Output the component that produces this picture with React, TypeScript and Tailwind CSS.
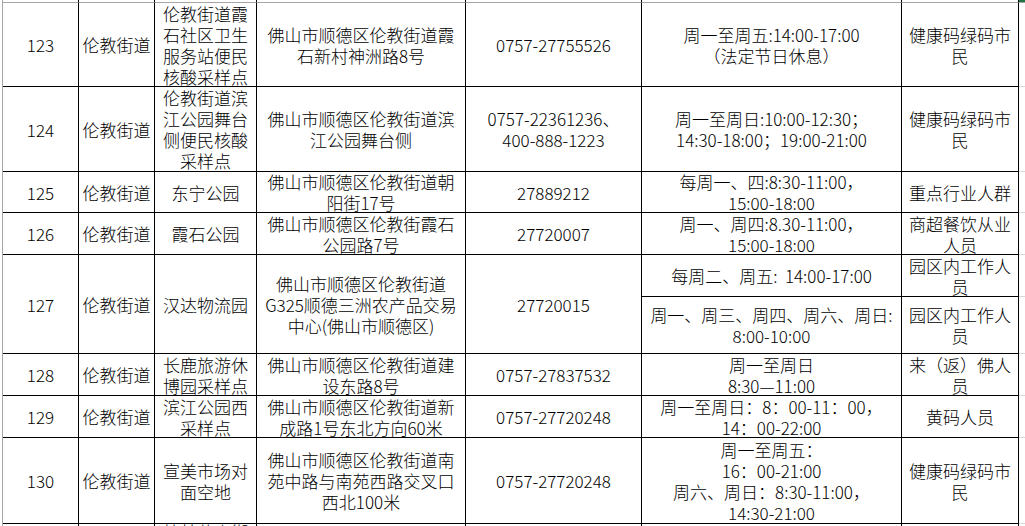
import React from "react";

interface Slot {
  time: string[];
  target: string[];
  h: string;
}

interface SiteRow {
  no: string;
  street: string;
  name: string[];
  addr: string[];
  phone: string[];
  h: string;
  slots: Slot[];
}

const rows: SiteRow[] = [
  {
    no: "123",
    street: "伦教街道",
    name: ["伦教街道霞", "石社区卫生", "服务站便民", "核酸采样点"],
    addr: ["佛山市顺德区伦教街道霞", "石新村神洲路8号"],
    phone: ["0757-27755526"],
    h: "h-[84px]",
    slots: [{ time: ["周一至周五:14:00-17:00", "（法定节日休息）"], target: ["健康码绿码市", "民"], h: "flex-1" }],
  },
  {
    no: "124",
    street: "伦教街道",
    name: ["伦教街道滨", "江公园舞台", "侧便民核酸", "采样点"],
    addr: ["佛山市顺德区伦教街道滨", "江公园舞台侧"],
    phone: ["0757-22361236、", "400-888-1223"],
    h: "h-[85px]",
    slots: [{ time: ["周一至周日:10:00-12:30；", "14:30-18:00；19:00-21:00"], target: ["健康码绿码市", "民"], h: "flex-1" }],
  },
  {
    no: "125",
    street: "伦教街道",
    name: ["东宁公园"],
    addr: ["佛山市顺德区伦教街道朝", "阳街17号"],
    phone: ["27889212"],
    h: "h-[41px]",
    slots: [{ time: ["每周一、四:8:30-11:00，", "15:00-18:00"], target: ["重点行业人群"], h: "flex-1" }],
  },
  {
    no: "126",
    street: "伦教街道",
    name: ["霞石公园"],
    addr: ["佛山市顺德区伦教街霞石", "公园路7号"],
    phone: ["27720007"],
    h: "h-[42px]",
    slots: [{ time: ["周一、周四:8.30-11:00，", "15:00-18:00"], target: ["商超餐饮从业", "人员"], h: "flex-1" }],
  },
  {
    no: "127",
    street: "伦教街道",
    name: ["汉达物流园"],
    addr: ["佛山市顺德区伦教街道", "G325顺德三洲农产品交易", "中心(佛山市顺德区)"],
    phone: ["27720015"],
    h: "h-[99px]",
    slots: [
      { time: ["每周二、周五:  14:00-17:00"], target: ["园区内工作人", "员"], h: "h-[42px]" },
      { time: ["周一、周三、周四、周六、周日:", "8:00-10:00"], target: ["园区内工作人", "员"], h: "flex-1" },
    ],
  },
  {
    no: "128",
    street: "伦教街道",
    name: ["长鹿旅游休", "博园采样点"],
    addr: ["佛山市顺德区伦教街道建", "设东路8号"],
    phone: ["0757-27837532"],
    h: "h-[42px]",
    slots: [{ time: ["周一至周日", "8:30—11:00"], target: ["来（返）佛人", "员"], h: "flex-1" }],
  },
  {
    no: "129",
    street: "伦教街道",
    name: ["滨江公园西", "采样点"],
    addr: ["佛山市顺德区伦教街道新", "成路1号东北方向60米"],
    phone: ["0757-27720248"],
    h: "h-[42px]",
    slots: [{ time: ["周一至周日：8：00-11：00，", "14：00-22:00"], target: ["黄码人员"], h: "flex-1" }],
  },
  {
    no: "130",
    street: "伦教街道",
    name: ["宣美市场对", "面空地"],
    addr: ["佛山市顺德区伦教街道南", "苑中路与南苑西路交叉口", "西北100米"],
    phone: ["0757-27720248"],
    h: "h-[86px]",
    slots: [
      {
        time: ["周一至周五：", "16：00-21:00", "周六、周日：8:30-11:00，", "14:30-21:00"],
        target: ["健康码绿码市", "民"],
        h: "flex-1",
      },
    ],
  },
  {
    no: "131",
    street: "伦教街道",
    name: ["桂林花卉街", "道口便民核", "酸采样点", "样点", "点"],
    addr: ["佛山市顺德区伦教街道", "荔村"],
    phone: ["0757-27720248"],
    h: "h-[100px]",
    slots: [{ time: ["周一至周日"], target: ["健康码绿码市", "民"], h: "flex-1" }],
  },
];

const cellBase =
  "flex flex-col items-center justify-center text-center overflow-hidden border-r border-b border-black shrink-0";

function Lines({ lines }: { lines: string[] }) {
  return (
    <>
      {lines.map((l, i) => (
        <div key={i} className="whitespace-pre leading-[21px]">
          {l}
        </div>
      ))}
    </>
  );
}

export default function App() {
  return (
    <div className="w-[1025px] h-[526px] overflow-hidden bg-white text-black text-[17px] font-light font-['Noto_Sans_CJK_SC',sans-serif]">
      <div className="ml-[2px] border-l border-[#a6a6a6] flex flex-col">
        {/* tail of the row above */}
        <div className="flex h-[3px]">
          <div className="w-[76px] shrink-0 border-r border-b border-r-black border-b-[#a6a6a6]" />
          <div className="w-[76px] shrink-0 border-r border-b border-r-black border-b-[#a6a6a6]" />
          <div className="w-[102px] shrink-0 border-r border-b border-r-black border-b-[#a6a6a6]" />
          <div className="w-[209px] shrink-0 border-r border-b border-r-black border-b-[#a6a6a6]" />
          <div className="w-[176px] shrink-0 border-r border-b border-r-black border-b-[#a6a6a6]" />
          <div className="w-[260px] shrink-0 border-r border-b border-r-black border-b-[#a6a6a6]" />
          <div className="w-[117px] shrink-0 border-r border-b border-r-black border-b-[#a6a6a6]" />
          <div className="flex-1 border-b border-[#a6a6a6] bg-[#217346]" />
        </div>

        {rows.map((r) => (
          <div key={r.no} className={`flex ${r.h} shrink-0`}>
            <div className={`${cellBase} w-[76px]`}>
              <Lines lines={[r.no]} />
            </div>
            <div className={`${cellBase} w-[76px]`}>
              <Lines lines={[r.street]} />
            </div>
            <div className={`${cellBase} w-[102px]`}>
              <Lines lines={r.name} />
            </div>
            <div className={`${cellBase} w-[209px]`}>
              <Lines lines={r.addr} />
            </div>
            <div className={`${cellBase} w-[176px]`}>
              <Lines lines={r.phone} />
            </div>
            <div className="flex-1 flex flex-col">
              {r.slots.map((s, i) => (
                <div key={i} className={`flex ${s.h} min-h-0`}>
                  <div className={`${cellBase} w-[260px]`}>
                    <Lines lines={s.time} />
                  </div>
                  <div className={`${cellBase} w-[117px]`}>
                    <Lines lines={s.target} />
                  </div>
                  <div className="flex-1 border-b border-[#d9d9d9]" />
                </div>
              ))}
            </div>
          </div>
        ))}
      </div>
    </div>
  );
}
